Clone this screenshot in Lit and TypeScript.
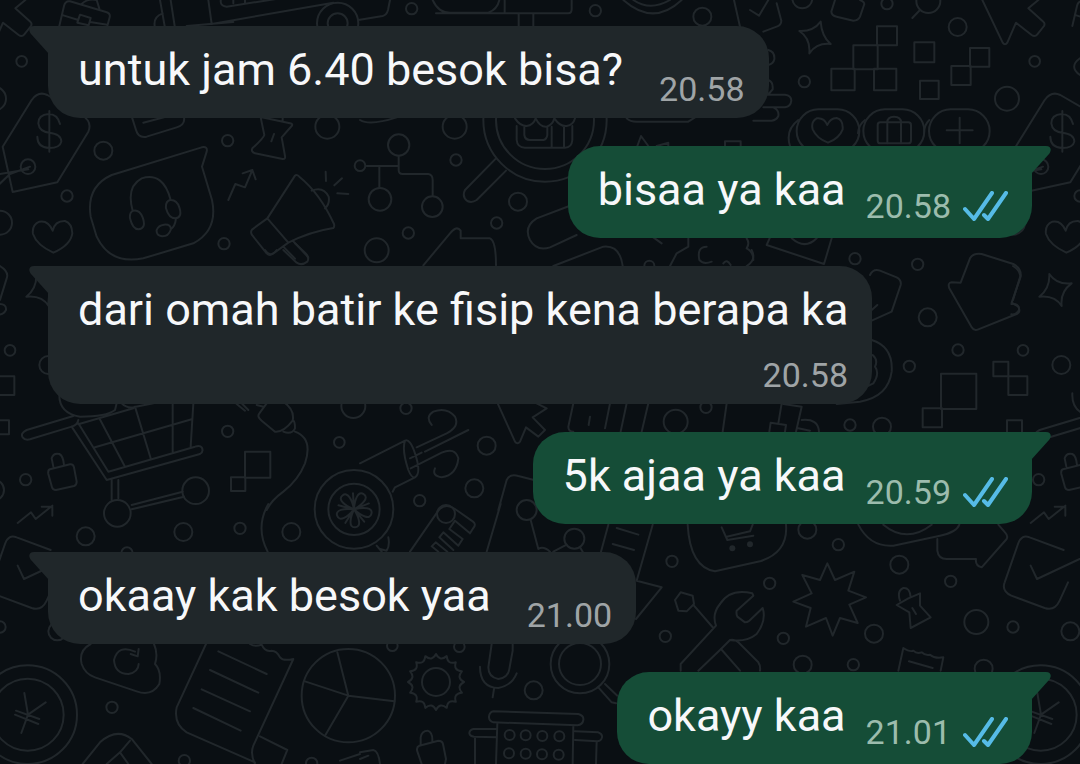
import { LitElement, html, svg, css, nothing } from "lit";
import { customElement, property } from "lit/decorators.js";

interface Message {
  text: string;
  time: string;
  sent: boolean;
}

const MESSAGES: Message[] = [
  { text: "untuk jam 6.40 besok bisa?", time: "20.58", sent: false },
  { text: "bisaa ya kaa", time: "20.58", sent: true },
  { text: "dari omah batir ke fisip kena berapa ka", time: "20.58", sent: false },
  { text: "5k ajaa ya kaa", time: "20.59", sent: true },
  { text: "okaay kak besok yaa", time: "21.00", sent: false },
  { text: "okayy kaa", time: "21.01", sent: true },
];

/* One block of the doodle wallpaper, drawn on a 1080 x 780 grid at one third scale. */
interface Doodle {
  x: number;
  y: number;
  circles: number[][];
  rects?: number[][];
  dots?: number[][];
  paths: string;
}

function gear(cx: number, cy: number, r: number, teeth: number): string {
  let d = "";
  for (let i = 0; i <= teeth; i++) {
    const a = (i / teeth) * Math.PI * 2;
    const m = ((i - 0.5) / teeth) * Math.PI * 2;
    const x = (cx + Math.cos(a) * r).toFixed(1);
    const y = (cy + Math.sin(a) * r).toFixed(1);
    const mx = (cx + Math.cos(m) * (r - 22)).toFixed(1);
    const my = (cy + Math.sin(m) * (r - 22)).toFixed(1);
    d += i === 0 ? `M${x} ${y}` : `Q${mx} ${my} ${x} ${y}`;
  }
  return d;
}

function blossom(cx: number, cy: number): string {
  let d = "";
  for (let i = 0; i < 5; i++) {
    const a = (i / 5) * Math.PI * 2 + 0.25;
    const p = (t: number, r: number) =>
      `${(cx + Math.cos(a + t) * r).toFixed(1)} ${(cy + Math.sin(a + t) * r).toFixed(1)}`;
    d += `M${cx} ${cy}C${p(-0.5, 30)} ${p(-0.35, 58)} ${p(0, 54)}C${p(0.35, 58)} ${p(0.5, 30)} ${cx} ${cy}`;
    d += `M${p(0.63, 14)}L${p(0.63, 48)}`;
  }
  return d;
}

/* Blocks along the left edge; they come round again where the pattern repeats. */
const LEFT: Doodle[] = [
  {
    x: 0,
    y: 0,
    circles: [
      [65, 184, 16], [-18, 296, 36], [310, 452, 27], [201, 588, 17], [683, 422, 17],
      [982, 380, 36], [1080, 497, 16], [0, 668, 36], [672, 731, 17], [84, 500, 22],
      [1013, 70, 62], [1013, 70, 30],
    ],
    paths:
      "M-92 0L-31 128Q-24 138 -17 128L9 68L56 105Q66 112 73 103L93 78Q97 70 91 65L46 25L76 0" +
      "M178 78L192 18Q196 2 210 4L318 36Q332 40 329 52L322 78M190 46L235 60M240 44L272 54L266 76L232 68ZM270 66L322 74M245 12Q262 -5 290 0L298 26" +
      "M488 40Q460 50 464 78M480 0L494 78M512 0L524 78" +
      "M625 0L635 72L1000 8M665 -10Q655 18 680 20L860 -8M700 0V10M735 0V8M560 78L700 66" +
      "M38 576L8 440L95 300Q115 272 142 285L245 345Q278 365 265 395L172 547ZM-10 560L30 522L90 500M-20 525L85 508" +
      "M148 333V455M180 372Q172 342 146 342Q115 344 115 370Q118 395 148 398Q184 402 184 425Q180 444 148 444Q112 442 112 410" +
      "M396 352L408 390Q415 415 440 410L530 382Q556 374 552 352M430 368L492 352" +
      "M782 352L793 405Q790 415 757 445Q752 455 765 460L848 477Q857 478 855 468L845 412L875 378Q880 372 870 370L785 352M848 362V352M822 402L814 424" +
      "M335 525L605 442Q624 438 620 455L606 500L636 600Q655 690 580 730L430 775Q330 795 290 710L272 650Q258 560 335 525Z" +
      "M398 632Q378 560 425 535Q490 515 512 600M400 632Q418 628 428 652Q440 685 415 688Q398 688 390 655Q388 636 400 632ZM510 600Q530 598 538 622Q548 652 526 655Q506 655 498 625Q496 604 510 600ZM528 656Q525 680 512 688M492 674Q515 672 512 690Q505 710 486 709Q468 706 470 690Q475 676 492 674Z" +
      "M685 600L706 552L735 562L757 510M728 520L757 510L767 538" +
      "M885 527L802 655L865 728Q930 695 1000 684Q1004 680 1002 672Q960 580 898 530Q890 522 885 527ZM802 655L757 688Q750 695 756 705L800 760Q808 768 818 762L865 728M850 740L885 776M878 722L925 772" +
      "M935 572Q970 558 986 590Q990 612 975 625M977 515L978 543M1026 535L1003 556M1012 580L1045 582" +
      "M158 692Q145 660 118 665Q95 675 99 702Q110 735 160 758Q212 735 217 700Q216 670 195 663Q165 662 158 692Z",
  },
  {
    x: 0,
    y: 250,
    circles: [
      [30, 301, 16], [77, 689, 17], [-20, 720, 32], [683, 544, 17], [1018, 577, 16],
      [145, 345, 27], [1060, 468, 36], [587, 722, 40], [352, 790, 40], [1062, 778, 118],
      [1062, 778, 77],
    ],
    rects: [
      [-59, 335, 45, 44], [-14, 379, 57, 56], [-18, 511, 45, 42], [735, 605, 76, 78],
      [693, 682, 43, 41],
    ],
    paths:
      "M0 48Q28 65 20 85L0 150M-5 162Q20 160 18 180Q10 195 -5 193" +
      "M109 72Q131 105 176 100Q141 125 146 168Q126 135 79 140Q111 115 109 72Z" +
      "M795 0Q810 25 830 0M850 0L890 38Q905 48 922 35Q930 22 915 8L885 -20" +
      "M178 430Q175 490 240 500Q320 500 345 480L350 460M365 460Q380 475 400 472L460 460M220 498L80 540Q60 550 68 562Q75 572 90 568L215 530Q232 525 235 510" +
      "M215 530L320 690L600 612Q612 605 605 592Q600 585 585 590L325 665L235 520M298 505L375 650M405 470L452 625M518 460V605M580 460L572 590M285 592L575 508M235 523L400 475M335 690V750M355 690V745M395 765L548 725M395 778L552 740" +
      "M160 650L155 625Q160 608 178 612Q190 618 192 645M150 658L210 643Q220 642 222 652L230 695Q230 705 222 708L168 720Q158 720 156 712L145 672Q143 660 150 658Z" +
      "M800 460L778 490Q770 500 785 512L825 545Q850 548 878 512Q885 480 850 455M850 545Q875 555 885 535Q885 515 880 512M885 545Q940 565 915 640Q895 690 850 725Q815 750 800 780M710 462L735 482M725 460L745 480M770 465L790 470" +
      blossom(1062, 778),
  },
  {
    x: 0,
    y: 504,
    circles: [
      [257, 97, 27], [550, 84, 27], [720, 73, 17], [874, 84, 27], [381, 147, 17],
      [0, 369, 17], [172, 382, 27], [336, 610, 17], [553, 770, 17], [935, 778, 17],
      [83, 632, 148], [83, 632, 108], [1045, 575, 140],
    ],
    paths:
      "M53 57L93 25L107 45L157 5M125 8H157V35M805 0Q765 70 803 143" +
      "M152 138L50 100Q25 90 15 120L-25 235Q-35 260 -5 275L95 312Q125 322 140 290L165 235M53 185L72 225L200 165" +
      "M73 567L84 632M137 595L84 632L64 687M48 620L118 645M45 632L115 660" +
      "M272 420Q235 440 245 480Q255 510 285 520L410 562Q455 578 478 540Q485 500 465 480Q475 450 462 420M405 443Q355 420 342 468Q345 510 385 510Q415 505 416 480M416 435L413 457L392 450" +
      "M248 780L300 715Q350 670 395 705L455 780M390 710L360 745L320 780M360 745L385 780" +
      "M618 420L530 610Q520 660 560 685L765 775M750 420Q765 430 785 422Q795 445 815 440Q830 440 840 460Q850 472 880 465L760 725Q750 750 765 780M780 697L862 738L845 780M655 442L800 510M630 498L775 566M605 556L750 622M580 612L722 680" +
      "M1045 575L1012 445M1045 575L915 532M1045 575L975 695M1045 575L1183 592M1020 770L1080 750",
  },
];

const REST: Doodle[] = [
  {
    x: 360,
    y: 0,
    circles: [
      [155, 26, 17], [706, 32, 17], [1027, 50, 27], [284, 380, 36], [116, 435, 32],
      [288, 480, 17], [474, 605, 27], [410, 669, 17], [145, 699, 17], [50, 751, 36],
      [60, 598, 34], [217, 620, 31], [555, 360, 185], [555, 360, 147],
    ],
    paths:
      "M90 0L84 30Q80 45 68 48L-5 60M218 0Q235 38 270 38H385Q412 28 418 0M228 40H625Q635 40 635 28V0M434 0V40M476 40V80M520 40V80" +
      "M790 0Q880 80 965 0M820 0Q870 35 930 0" +
      "M408 475L315 570Q305 590 322 603Q335 610 350 600L438 512" +
      "M470 378V420Q472 443 495 443H615Q635 443 637 420V378M493 382V405Q495 420 510 420H550Q560 418 562 405V382M575 380V443M612 380V443M465 355Q480 378 500 378Q520 375 527 355Q540 382 560 380Q578 375 583 355Q600 380 620 378Q640 375 645 355" +
      "M20 498H116M116 467V510Q116 522 128 522H205Q218 524 218 540V588M58 498V564" +
      "M190 796L270 700Q290 675 302 692V715H390Q408 722 408 796" +
      "M628 618L530 655Q490 680 510 720Q530 755 570 742L650 705M580 798L730 740Q780 735 788 798" +
      "M800 355Q810 365 830 365H985L1005 352M832 438L843 408L865 438M890 438L925 428V438M880 712L905 730" +
      "M985 715V740L950 760L930 798M1040 740Q1010 740 1018 780Q1030 795 1055 785M0 360Q30 378 110 352",
  },
  {
    x: 720,
    y: 0,
    circles: [
      [247, -5, 30], [501, 11, 17], [713, 81, 27], [253, 245, 17], [625, 3, 36],
      [405, 776, 17],
    ],
    rects: [
      [471, 79, 60, 57], [400, 136, 73, 72], [334, 206, 70, 65], [462, 206, 67, 65],
      [583, 127, 60, 60], [600, 242, 56, 55], [750, 144, 58, 56], [694, 198, 58, 57],
      [230, 328, 188, 130, 65], [430, 328, 183, 130, 65], [627, 328, 182, 130, 65],
      [473, 367, 100, 63, 8],
    ],
    paths:
      "M42 0L60 80M90 30L117 47L145 0M170 10L184 62Q184 75 170 80L130 95M600 30L577 54" +
      "M345 0L334 35Q335 48 350 50L400 62Q415 62 420 50L433 12Q433 5 420 0" +
      "M238 93Q280 95 302 65Q305 110 332 132Q290 128 268 160Q272 115 238 93Z" +
      "M1080 175Q1045 200 1080 225" +
      "M235 360Q195 390 210 438M435 360Q415 375 414 400M628 360Q612 375 612 400" +
      "M322 375Q312 352 290 355Q272 365 278 388Q290 415 324 428Q358 415 368 388Q370 358 350 354Q330 355 322 375Z" +
      "M502 367V430M543 367V430M502 367Q502 350 522 350Q543 350 543 367M680 391H758M719 353V430" +
      "M145 150Q165 155 163 178Q160 192 145 195M145 240Q160 245 158 268Q150 280 140 284H195Q214 286 214 302Q212 320 195 322H130M160 322Q178 330 175 348Q170 360 155 362H100" +
      "M15 438V424H62V438M80 715Q90 730 80 745Q100 755 100 780M150 712L140 735L312 792L335 715M215 715Q255 750 290 715",
  },
  {
    x: 360,
    y: 250,
    circles: [
      [138, 475, 17], [380, 587, 27], [343, 715, 27], [179, 752, 17], [1038, 472, 17],
      [947, 515, 36], [868, 47, 15], [500, 780, 30], [258, 792, 27],
    ],
    paths:
      "M0 640L135 572Q150 565 165 610Q185 670 165 682L105 712L98 725M135 572Q125 600 145 660Q155 685 165 682" +
      "M215 525Q195 500 220 485Q260 470 285 500Q300 530 260 550L170 592M325 540L195 605M150 625L185 608M152 655L245 608Q285 590 295 625Q290 675 245 682Q215 678 225 655" +
      "M413 460L465 575Q472 585 480 575L498 532L535 560L555 540L518 502L560 475L530 460" +
      "M640 460L625 530Q625 545 640 545M690 500L686 525M750 460L735 535M800 460L782 545M865 460L845 545" +
      "M415 780L440 690Q450 670 475 678L522 690",
  },
  {
    x: 720,
    y: 250,
    circles: [
      [593, 43, 17], [623, 202, 27], [714, 300, 17], [568, 349, 17], [390, 525, 17],
      [486, 530, 27],
    ],
    rects: [
      [663, 371, 106, 106], [608, 475, 58, 57],
    ],
    paths:
      "M450 75Q460 55 480 62L530 82Q545 90 542 105L515 185L455 212M455 180L472 165" +
      "M722 98L750 25Q760 8 785 12L880 42Q905 55 902 80L875 158L895 170Q903 185 890 192L775 238Q762 244 755 232L688 115Q682 98 695 97Z" +
      "M455 270Q520 290 515 365Q505 440 420 455L350 462M458 315Q475 330 465 350Q480 370 460 400L435 412" +
      "M20 460L8 545M185 460L175 520M148 545L152 518L198 525L195 545M190 462L245 470L228 545M245 510Q295 505 297 545M235 535L270 542" +
      "M95 0Q110 30 80 48M10 40Q20 25 32 45",
  },
  {
    x: 360,
    y: 504,
    circles: [
      [643, 104, 30], [97, 425, 16], [298, 428, 16], [521, 559, 27],
      [936, 172, 17], [916, 397, 17], [228, 534, 42], [660, 480, 88], [660, 480, 63],
      [449, 693, 15], [497, 694, 15], [547, 696, 15], [598, 697, 15],
      [447, 748, 15], [497, 749, 15], [546, 751, 15], [596, 752, 15],
    ],
    paths:
      "M60 135L80 140Q90 125 85 100M50 125L65 143M150 143L235 20Q255 -5 285 15L338 52Q350 60 340 72L330 88L285 50L268 75L308 105L295 125L250 85L238 100L280 138M235 143L215 127L227 115L262 143" +
      "M422 0L380 143M512 48L535 135Q550 125 570 143M580 143L620 122M660 130L668 143" +
      "M745 62L723 143M878 62L830 230L905 250L828 345M770 72L835 92M758 120L822 138" +
      "M962 265L998 275L1002 300L980 322L955 320L945 288ZM1002 305L1060 372M1068 365L962 480V500M1083 435L1015 500M1080 300Q1055 330 1068 365" +
      gear(228, 534, 84, 16) +
      "M395 420L385 490Q385 520 415 525Q445 520 448 495L458 440V420M360 488Q360 550 415 552Q455 545 470 508M402 555L398 580" +
      "M715 550L755 595L768 598M735 540L772 575" +
      "M400 622L655 630Q672 635 670 648Q668 662 652 664L400 655Q386 650 387 638Q388 625 400 622ZM412 658L408 780M640 664L638 780M410 675H340Q328 678 328 688Q330 697 342 698L410 700M645 682L715 685Q728 690 726 700Q724 710 712 712L645 708M345 700V780M710 712L708 780" +
      "M182 720V700Q185 680 203 680Q218 685 217 710M178 725L235 710Q247 710 249 720L258 765L255 780M178 725Q168 730 172 742L185 780M0 745L40 738Q55 740 60 780M0 765L25 755",
  },
  {
    x: 720,
    y: 504,
    circles: [
      [262, 77, 27], [355, 122, 17], [538, 182, 27], [149, 238, 17], [692, 232, 17],
      [462, 389, 27], [190, 403, 17], [769, 354, 36], [248, 482, 27], [400, 482, 17],
      [791, 494, 27],
    ],
    dots: [[37, 133, 9], [90, 121, 9]],
    paths:
      "M-97 62Q-90 190 -15 202L120 172Q205 145 198 62M5 70L22 108L100 95M20 98L90 82L98 62" +
      "M415 62Q450 130 520 125L660 95Q710 85 718 62M490 62Q560 120 635 62" +
      "M652 105V140Q655 165 680 165H768Q765 185 785 190L860 105Q865 95 855 85L835 62" +
      "M322 178L345 228L403 203L385 260L438 280L388 302L413 357L360 342L338 395L318 342L258 368L272 312L220 293L275 268L247 213L300 228Z" +
      "M565 283L600 268V305L632 340L572 372L568 325L530 303ZM540 290Q530 260 550 252Q570 250 572 280M577 312L588 330" +
      "M0 300Q30 252 97 268L100 275L50 320Q48 330 52 338L75 355Q82 355 88 350L128 312Q140 350 110 390Q80 415 30 408L3 435L60 500M30 408Q45 405 55 415L115 475Q122 485 120 500" +
      "M535 500L550 432Q570 445 580 440Q590 450 605 445Q615 455 630 452Q645 465 670 460L662 500M567 472L638 492",
  },
];

const REPEAT_X = 1013;

const drawDoodle = (d: Doodle, shift = 0) => svg`
  <g transform="translate(${d.x + shift} ${d.y}) scale(0.33333)">
    <path d=${d.paths}></path>
    ${d.circles.map(([x, y, r]) => svg`<circle cx=${x} cy=${y} r=${r}></circle>`)}
    ${(d.rects ?? []).map(
      ([x, y, w, h, r]) =>
        svg`<rect x=${x} y=${y} width=${w} height=${h} rx=${r ?? 0}></rect>`
    )}
    ${(d.dots ?? []).map(
      ([x, y, r]) => svg`<circle class="dot" cx=${x} cy=${y} r=${r}></circle>`
    )}
  </g>`;

@customElement("chat-wallpaper")
export class ChatWallpaper extends LitElement {
  static styles = css`
    :host {
      display: block;
    }
    .art {
      display: block;
      width: 100%;
      height: 100%;
      fill: none;
      stroke: #21272b;
      stroke-width: 6;
      stroke-linecap: round;
      stroke-linejoin: round;
    }
    .dot {
      fill: #21272b;
      stroke: none;
    }
  `;

  render() {
    return html`
      <svg class="art" viewBox="0 0 1080 764" preserveAspectRatio="xMinYMin slice" aria-hidden="true">
        ${LEFT.map((d) => drawDoodle(d))}
        ${LEFT.map((d) => drawDoodle(d, REPEAT_X))}
        ${REST.map((d) => drawDoodle(d))}
      </svg>
    `;
  }
}

@customElement("chat-bubble")
export class ChatBubble extends LitElement {
  @property({ attribute: false }) message!: Message;

  static styles = css`
    :host {
      display: flex;
    }
    .bubble {
      position: relative;
      box-sizing: border-box;
      display: flex;
      flex-wrap: wrap;
      align-items: flex-end;
      justify-content: flex-end;
      gap: 6px 36px;
      max-width: calc(100% - 160px);
      padding: 18px 12px 9px 30px;
      border-radius: 0 32px 32px 32px;
      background: #20272a;
      color: #f7f8fa;
    }
    .sent {
      margin-left: auto;
      column-gap: 20px;
      padding-bottom: 12px;
      border-radius: 32px 0 32px 32px;
      background: #154d37;
    }
    .text {
      flex: 0 1 auto;
      margin: 0 auto 13px 0;
      font-size: 45px;
      line-height: 52px;
    }
    .sent .text {
      margin-bottom: 10px;
    }
    .meta {
      display: flex;
      align-items: center;
      gap: 12px;
      margin-right: 12px;
      font-size: 34px;
      line-height: 40px;
      color: #9fa4a6;
    }
    .sent .meta {
      color: #9cbcad;
    }
    .ticks {
      width: 45px;
      height: 30px;
      fill: none;
      stroke: #56bbe6;
      stroke-width: 4;
      stroke-linecap: round;
      stroke-linejoin: round;
    }
    .tail {
      position: absolute;
      top: 0;
      right: 100%;
      width: 20px;
      height: 28px;
      margin-right: -1px;
      fill: #20272a;
    }
    .sent .tail {
      right: auto;
      left: 100%;
      margin: 0 0 0 -1px;
      fill: #154d37;
      transform: scaleX(-1);
    }
  `;

  render() {
    const { text, time, sent } = this.message;
    return html`
      <div class="bubble ${sent ? "sent" : ""}">
        <svg class="tail" viewBox="0 0 20 28" aria-hidden="true">
          <path d="M20 0H5C0 0 -1 4 2 8L20 28Z"></path>
        </svg>
        <p class="text">${text}</p>
        <span class="meta">
          <time datetime=${time.replace(".", ":")}>${time}</time>
          ${sent
            ? html`<svg class="ticks" viewBox="0 0 45 30" role="img" aria-label="Dibaca">
                <path d="M2 18L11 28L29 2M21 24L25 28L43 2"></path>
              </svg>`
            : nothing}
        </span>
      </div>
    `;
  }
}

@customElement("app-root")
export class AppRoot extends LitElement {
  static styles = css`
    :host {
      position: relative;
      display: block;
      min-height: 100vh;
      overflow: hidden;
      background: #0a0f13;
      font-family: Roboto, "Noto Sans", sans-serif;
    }
    .wallpaper {
      position: absolute;
      inset: 0;
    }
    .thread {
      position: relative;
      display: flex;
      flex-direction: column;
      gap: 28px;
      margin: 0;
      padding: 26px 48px 0;
      list-style: none;
    }
  `;

  render() {
    return html`
      <chat-wallpaper class="wallpaper"></chat-wallpaper>
      <ol class="thread">
        ${MESSAGES.map(
          (m) => html`<li><chat-bubble .message=${m}></chat-bubble></li>`
        )}
      </ol>
    `;
  }
}
